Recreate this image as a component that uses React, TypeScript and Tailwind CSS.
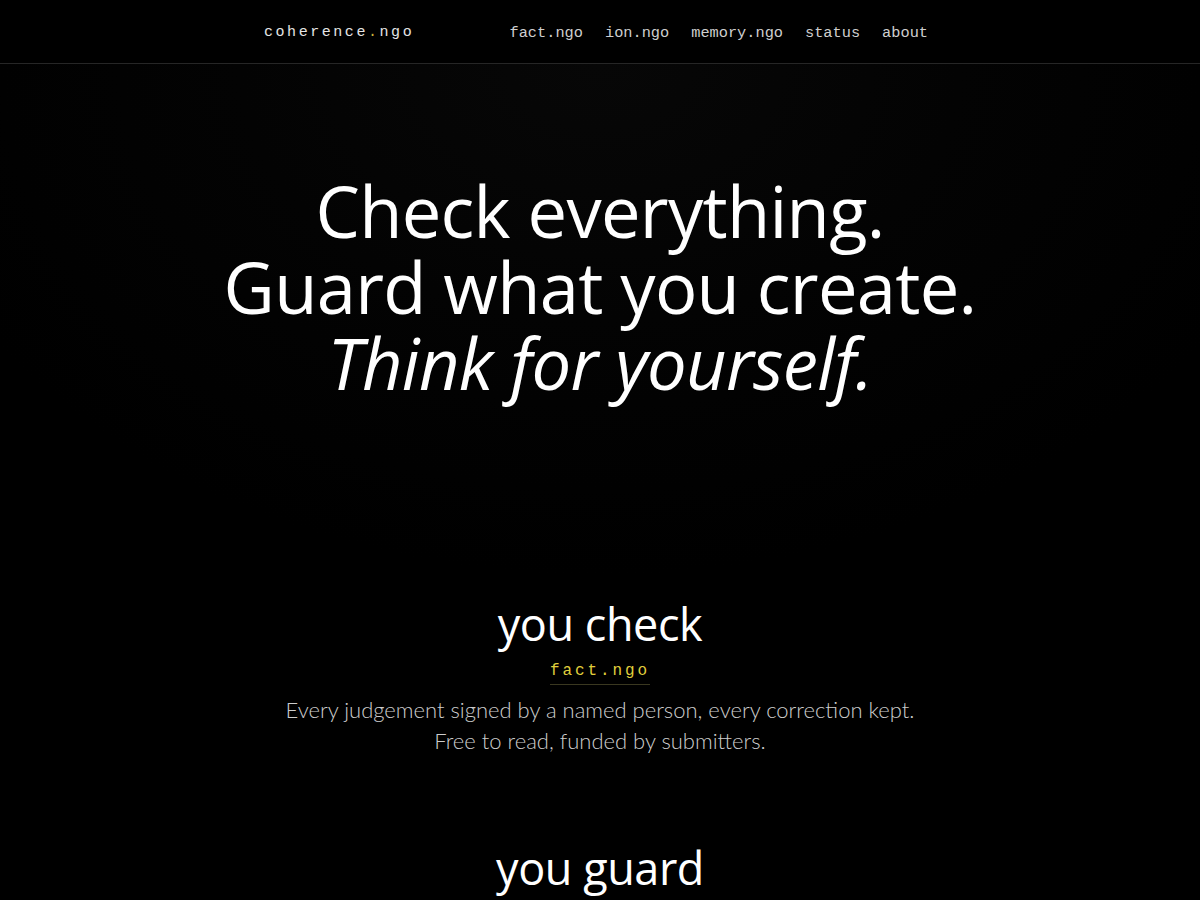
const mono = "font-['Liberation_Mono','DejaVu_Sans_Mono',monospace]";

const links = ['fact.ngo', 'ion.ngo', 'memory.ngo', 'status', 'about'];

const sections = [
  {
    title: 'you check',
    site: 'fact.ngo',
    lines: ['Every judgement signed by a named person, every correction kept.', 'Free to read, funded by submitters.'],
  },
  {
    title: 'you guard',
    site: 'ion.ngo',
    lines: ['Your work, registered and defended.', 'Proof of who made what, and when.'],
  },
];

export default function App() {
  return (
    <div className="min-h-screen bg-black text-white font-['Open_Sans','Noto_Sans',sans-serif]">
      <header className="h-16 border-b border-[#262626] bg-black">
        <div className="mx-auto flex h-full max-w-[672px] items-center justify-between pt-[3px]">
          <a className={`${mono} text-[15px] tracking-[0.17em] text-[#e5e5e5]`}>
            coherence<span className="text-[#c9b53a]">.</span>ngo
          </a>
          <nav className={`${mono} flex items-center gap-[22px] pr-2 text-[15.3px] text-[#cfcfcf]`}>
            {links.map(l => (
              <a key={l}>{l}</a>
            ))}
          </nav>
        </div>
      </header>

      <main className="bg-[radial-gradient(ellipse_60%_50%_at_50%_0%,#070707_0%,#030303_50%,#000_100%)]">
        <section className="flex flex-col items-center pt-[109px] pb-[197px] text-center">
          <h1 className="text-[70.5px] font-normal leading-[76px] tracking-[-0.01em]">
            Check everything.
            <br />
            Guard what you create.
            <br />
            <em>Think for yourself.</em>
          </h1>
        </section>

        {sections.map(s => (
          <section key={s.title} className="flex flex-col items-center pb-[86px] text-center">
            <h2 className="text-[45px] font-normal leading-[52px] tracking-[-0.01em]">{s.title}</h2>
            <a
              className={`${mono} mt-[9px] border-b border-[#3a3820] pb-[1px] text-[16px] tracking-[0.18em] text-[#e0cf3c]`}
            >
              {s.site}
            </a>
            <div className="mt-[9px] font-['Lato',sans-serif] text-[22px] font-light leading-[31px] text-[#cccccc]">
              {s.lines.map(line => (
                <p key={line}>{line}</p>
              ))}
            </div>
          </section>
        ))}
      </main>
    </div>
  );
}
